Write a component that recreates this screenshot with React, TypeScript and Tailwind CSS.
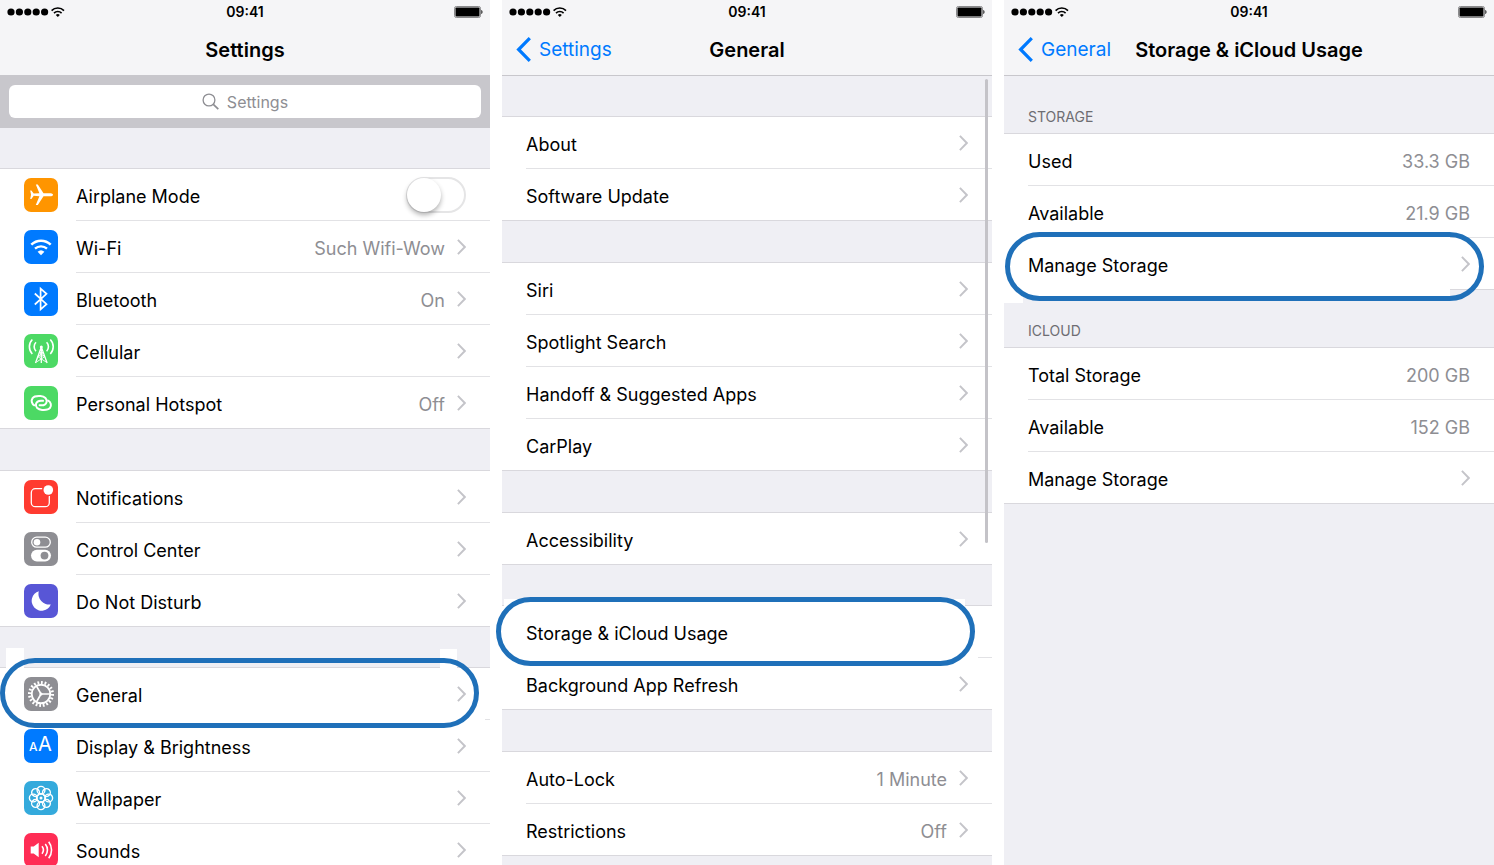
import type { ReactNode } from "react";

type RowProps = {
  label: string;
  icon?: ReactNode;
  value?: string;
  link?: boolean;
  chevron?: boolean;
  toggle?: boolean;
  highlight?: ReactNode;
};

export default function App() {
  return (
    <main className="flex h-screen gap-3 overflow-hidden bg-white font-['Inter','Liberation_Sans',sans-serif] text-lg leading-6 text-black">
      <SettingsScreen />
      <GeneralScreen />
      <StorageScreen />
    </main>
  );
}

function SettingsScreen() {
  return (
    <Screen title="Settings">
      <div className="bg-[#c8c7cc] px-[9px] pt-[9px] pb-[10px]">
        <label className="flex h-[33px] items-center justify-center gap-2 rounded-md bg-white">
          <svg width="17" height="17" viewBox="0 0 17 17" fill="none" stroke="#8e8e93" strokeWidth="1.3">
            <circle cx="7" cy="7" r="5.9" />
            <path d="M11.3 11.3l5 4.9" strokeWidth="1.7" />
          </svg>
          <input
            type="search"
            aria-label="Search settings"
            placeholder="Settings"
            className="field-sizing-content text-base outline-none placeholder:text-[#8e8e93]"
          />
        </label>
      </div>
      <Spacer className="h-[41px]" />
      <ul>
        <Row label="Airplane Mode" icon={<AirplaneIcon />} toggle />
        <Row label="Wi-Fi" icon={<WifiIcon />} value="Such Wifi-Wow" link />
        <Row label="Bluetooth" icon={<BluetoothIcon />} value="On" link />
        <Row label="Cellular" icon={<CellularIcon />} link />
        <Row label="Personal Hotspot" icon={<HotspotIcon />} value="Off" link />
      </ul>
      <Spacer className="h-[42px]" />
      <ul>
        <Row label="Notifications" icon={<NotificationsIcon />} link />
        <Row label="Control Center" icon={<ControlCenterIcon />} link />
        <Row label="Do Not Disturb" icon={<MoonIcon />} link />
      </ul>
      <Spacer className="h-[41px]" />
      <ul>
        <Row
          label="General"
          icon={<GearIcon />}
          link
          highlight={
            <>
              <span className="absolute -top-5 left-[6px] h-6 w-[18px] bg-white" />
              <span className="absolute -top-[19px] right-[33px] h-6 w-[17px] bg-white" />
              <span className="absolute right-0 bottom-0 h-px w-[5px] bg-[#e2e2e5]" />
              <Ring className="-top-[10px] right-[11px] -bottom-[8px] left-0" />
            </>
          }
        />
        <Row label="Display & Brightness" icon={<DisplayIcon />} link />
        <Row label="Wallpaper" icon={<WallpaperIcon />} link />
        <Row label="Sounds" icon={<SoundsIcon />} link />
      </ul>
    </Screen>
  );
}

function GeneralScreen() {
  return (
    <Screen title="General" back="Settings">
      <Spacer className="h-[41px]" />
      <ul>
        <Row label="About" link />
        <Row label="Software Update" link />
      </ul>
      <Spacer className="h-[42px]" />
      <ul>
        <Row label="Siri" link />
        <Row label="Spotlight Search" link />
        <Row label="Handoff & Suggested Apps" link />
        <Row label="CarPlay" link />
      </ul>
      <Spacer className="h-[42px]" />
      <ul>
        <Row label="Accessibility" link />
      </ul>
      <Spacer className="h-[41px]" />
      <ul>
        <Row
          label="Storage & iCloud Usage"
          link
          chevron={false}
          highlight={
            <>
              <span className="absolute -top-[7px] right-[27px] bottom-0 left-[2px] bg-white" />
              <span className="absolute right-0 bottom-0 h-px w-[14px] bg-[#e2e2e5]" />
              <Ring className="-top-[9px] right-[17px] -bottom-[8px] -left-[6px]" />
            </>
          }
        />
        <Row label="Background App Refresh" link />
      </ul>
      <Spacer className="h-[42px]" />
      <ul>
        <Row label="Auto-Lock" value="1 Minute" link />
        <Row label="Restrictions" value="Off" link />
      </ul>
      <span className="absolute top-[79px] right-1 h-[464px] w-[3px] rounded-full bg-[#c4c3c8]" />
    </Screen>
  );
}

function StorageScreen() {
  return (
    <Screen title="Storage & iCloud Usage" back="General">
      <GroupTitle>Storage</GroupTitle>
      <ul>
        <Row label="Used" value="33.3 GB" />
        <Row label="Available" value="21.9 GB" />
        <Row
          label="Manage Storage"
          link
          highlight={
            <>
              <span className="absolute -top-[2px] right-[44px] -bottom-[8px] left-[10px] bg-white" />
              <span className="absolute -bottom-[14px] left-0 h-10 w-[19px] bg-white" />
              <Ring className="-top-[6px] right-[10px] -bottom-[12px] left-px" />
            </>
          }
        />
      </ul>
      <GroupTitle>iCloud</GroupTitle>
      <ul>
        <Row label="Total Storage" value="200 GB" />
        <Row label="Available" value="152 GB" />
        <Row label="Manage Storage" link />
      </ul>
    </Screen>
  );
}

function Screen({ title, back, children }: { title: string; back?: string; children: ReactNode }) {
  return (
    <section className="relative min-w-0 flex-1 bg-[#efeff4]">
      <header className="h-[76px] border-b border-[#c8c7cc] bg-[#f5f5f7]">
        <div className="grid h-6 grid-cols-3 items-center px-[7px]">
          <SignalIcon />
          <span className="text-center text-sm leading-4 font-semibold">09:41</span>
          <BatteryIcon />
        </div>
        <div className="grid h-[51px] grid-cols-[1fr_auto_1fr] items-center">
          <div className="pl-[14px]">
            {back && (
              <a href="#back" className="flex items-center gap-2 text-[19px] text-[#007aff]">
                <svg width="15" height="25" viewBox="0 0 15 25" fill="none" stroke="currentColor" strokeWidth="3.2">
                  <path d="M13.8 1.2L2.6 12.5l11.2 11.3" />
                </svg>
                {back}
              </a>
            )}
          </div>
          <h1 className="text-xl font-semibold">{title}</h1>
          <div />
        </div>
      </header>
      {children}
    </section>
  );
}

function Spacer({ className }: { className: string }) {
  return <div className={`border-b border-[#d9d8dd] ${className}`} />;
}

function GroupTitle({ children }: { children: ReactNode }) {
  return (
    <h2 className="flex h-[58px] items-end border-b border-[#d9d8dd] pb-1 pl-6 text-sm leading-6 text-[#6d6d72] uppercase">
      {children}
    </h2>
  );
}

function Row({ label, icon, value, link, chevron = link, toggle, highlight }: RowProps) {
  const layout = "relative flex h-full items-center gap-[18px] pl-6";
  const body = (
    <>
      {icon}
      <span
        className={`flex h-full flex-1 items-center justify-between border-b pr-6 group-last:border-b-0 ${
          highlight ? "border-transparent" : "border-[#e2e2e5]"
        }`}
      >
        <span className="pt-[5px]">{label}</span>
        {toggle && <Toggle />}
        <span className="flex items-center gap-3 text-[#8e8e93]">
          {value && <span className="pt-[5px]">{value}</span>}
          {chevron && <Chevron />}
        </span>
      </span>
    </>
  );

  return (
    <li className={`group relative h-[52px] border-[#d9d8dd] bg-white last:border-b ${highlight ? "z-10" : ""}`}>
      {highlight}
      {link && (
        <a href="#open" className={layout}>
          {body}
        </a>
      )}
      {!link && (toggle ? <label className={layout}>{body}</label> : <div className={layout}>{body}</div>)}
    </li>
  );
}

function Ring({ className }: { className: string }) {
  return <span className={`pointer-events-none absolute rounded-full border-[5px] border-[#1f70b9] ${className}`} />;
}

function Toggle() {
  return (
    <input
      type="checkbox"
      role="switch"
      className="relative ml-auto h-9 w-[60px] appearance-none rounded-full border-2 border-[#e5e5e6] bg-white before:absolute before:-top-px before:-left-px before:h-[34px] before:w-[34px] before:rounded-full before:bg-white before:shadow-[0_3px_5px_rgba(0,0,0,0.3)] checked:bg-[#4cd964] checked:before:left-[23px]"
    />
  );
}

function Chevron() {
  return (
    <svg width="9" height="16" viewBox="0 0 9 16" fill="none" stroke="#c4c4c9" strokeWidth="1.9">
      <path d="M.9.9L7.8 8 .9 15.1" />
    </svg>
  );
}

function SignalIcon() {
  return (
    <svg width="58" height="12" viewBox="0 0 58 12">
      <circle cx="4" cy="6" r="3.6" />
      <circle cx="12.4" cy="6" r="3.6" />
      <circle cx="20.8" cy="6" r="3.6" />
      <circle cx="29.2" cy="6" r="3.6" />
      <circle cx="37.6" cy="6" r="3.6" />
      <g fill="none" stroke="#000" strokeWidth="1.6">
        <path d="M44.6 4.6a8.6 8.6 0 0 1 12.4 0" />
        <path d="M47 7.1a5.3 5.3 0 0 1 7.6 0" />
      </g>
      <path d="M50.8 11l-2-2.1a2.9 2.9 0 0 1 4 0z" />
    </svg>
  );
}

function BatteryIcon() {
  return (
    <svg width="29" height="12" viewBox="0 0 29 12" className="justify-self-end">
      <rect x=".5" y=".5" width="26" height="11" rx="1.8" fill="none" stroke="#8a8a8c" />
      <rect x="1.5" y="1.5" width="24" height="9" rx=".8" />
      <path d="M27.4 4c1.4.4 1.4 3.6 0 4z" />
    </svg>
  );
}

function Tile({ className, children }: { className: string; children: ReactNode }) {
  return (
    <svg
      width="34"
      height="34"
      viewBox="0 0 34 34"
      fill="none"
      stroke="#fff"
      className={`shrink-0 rounded-[7px] ${className}`}
    >
      {children}
    </svg>
  );
}

function AirplaneIcon() {
  return (
    <Tile className="bg-[#ff9500]">
      <path
        fill="#fff"
        stroke="none"
        d="M29 16.7c0-1-1.5-1.500-3-1.500h-6.500L13.800 6.400h-2l3.600 8.800-5.700.4-2.300-3.100H6.200l.8 4.200-.8 4.200h1.200l2.300-3.100 5.700.4-3.600 8.800h2l5.700-8.800H26c1.500 0 3-.5 3-1.500z"
      />
    </Tile>
  );
}

function WifiIcon() {
  return (
    <Tile className="bg-[#007aff]">
      <path d="M7.3 14.6a14 14 0 0 1 19.4 0" strokeWidth="2.5" />
      <path d="M11 18.7a8.8 8.8 0 0 1 12 0" strokeWidth="2.3" />
      <path d="M17 25.3l-3.400-3.500a5 5 0 0 1 6.800 0z" fill="#fff" stroke="none" />
    </Tile>
  );
}

function BluetoothIcon() {
  return (
    <Tile className="bg-[#007aff]">
      <path d="M10.8 11.5l11.7 10.7-5.9 5.200V6.600l5.900 5.200-11.700 10.700" strokeWidth="1.7" />
    </Tile>
  );
}

function CellularIcon() {
  return (
    <Tile className="bg-[#4cd964]">
      <g strokeWidth="1.3">
        <path d="M17.3 13L11.5 29M17.3 13L23.1 29M17.3 13v16" />
        <path
          d="M15.5 18.5h3.6M14 22h6.6M15.3 18.8l5.3 3.4M19.3 18.8L14 22.2M13.7 22.6l8.7 5.6M20.9 22.6l-8.7 5.6"
          strokeWidth=".9"
        />
        <path d="M8.3 5.5a10.5 10.5 0 0 0 0 14.5M26.3 5.5a10.5 10.5 0 0 1 0 14.5" strokeWidth="1.6" />
        <path d="M12 8.3a6.3 6.3 0 0 0 0 8.9M22.600 8.300a6.300 6.300 0 0 1 0 8.900" strokeWidth="1.6" />
      </g>
      <circle cx="17.3" cy="13" r="1.5" fill="#fff" stroke="none" />
    </Tile>
  );
}

function HotspotIcon() {
  const link = "M10.3 19.300C7.600 17.800 6.900 14.500 8.600 12.100C9.900 10.300 12 9.800 16.500 10.100C20.800 10.400 23.300 12.900 22.600 16C21.900 18.900 19 19.700 15.600 19.200";

  return (
    <Tile className="bg-[#4cd964]">
      <g strokeWidth="2" strokeLinecap="round">
        <path d={link} />
        <path d={link} transform="rotate(180 17.3 17)" />
      </g>
    </Tile>
  );
}

function NotificationsIcon() {
  return (
    <Tile className="bg-[#ff3b30]">
      <rect x="7.3" y="8.7" width="18" height="18" rx="4" strokeWidth="1.3" />
      <circle cx="24.3" cy="10" r="6.2" fill="#ff3b30" stroke="none" />
      <circle cx="24.3" cy="10" r="4.8" fill="#fff" stroke="none" />
    </Tile>
  );
}

function ControlCenterIcon() {
  return (
    <Tile className="bg-[#8e8e93]">
      <rect x="7.7" y="5.2" width="18.6" height="10" rx="5" strokeWidth="1.3" />
      <circle cx="13" cy="10.2" r="3.3" fill="#fff" stroke="none" />
      <rect x="7" y="17.8" width="20" height="11.6" rx="5.8" fill="#fff" stroke="none" />
      <circle cx="20.5" cy="23.6" r="3.9" fill="#8e8e93" stroke="none" />
    </Tile>
  );
}

function MoonIcon() {
  return (
    <Tile className="bg-[#5856d6]">
      <path d="M14.8 7.3a9.9 9.9 0 1 0 12 13.1A10.6 10.6 0 0 1 14.8 7.3z" fill="#fff" stroke="none" />
    </Tile>
  );
}

function GearIcon() {
  return (
    <Tile className="bg-[#8e8e93]">
      <circle cx="17" cy="17" r="11.5" strokeWidth="3" strokeDasharray="1.8 1.811" pathLength="72.22" />
      <circle cx="17" cy="17" r="9.3" strokeWidth="1.9" />
      <path d="M17 17h9M17 17l-4.5-7.8M17 17l-4.5 7.8" strokeWidth="1.7" />
      <circle cx="17" cy="17" r="1.6" fill="#fff" stroke="none" />
    </Tile>
  );
}

function DisplayIcon() {
  return (
    <Tile className="bg-[#007aff]">
      <g fill="#fff" stroke="none">
        <text x="5" y="22" fontSize="12" fontWeight="500">
          A
        </text>
        <text x="14" y="22" fontSize="20">
          A
        </text>
      </g>
    </Tile>
  );
}

function WallpaperIcon() {
  return (
    <Tile className="bg-[#34aadc]">
      <g strokeWidth="1.4">
        {[0, 45, 90, 135, 180, 225, 270, 315].map((angle) => (
          <circle key={angle} cx="17" cy="9.3" r="3.9" transform={`rotate(${angle} 17 17)`} />
        ))}
        <circle cx="17" cy="17" r="4.4" />
      </g>
      <circle cx="17" cy="17" r="1.5" fill="#fff" stroke="none" />
    </Tile>
  );
}

function SoundsIcon() {
  return (
    <Tile className="bg-[#ff2d55]">
      <path d="M6.7 13.5h3l5-3.7v14.4l-5-3.7h-3z" fill="#fff" stroke="none" />
      <path
        d="M18 13.3a6 6 0 0 1 0 7.4M21.3 11a9.5 9.5 0 0 1 0 12M24.7 8.7a13.5 13.5 0 0 1 0 16.6"
        strokeWidth="1.6"
      />
    </Tile>
  );
}
